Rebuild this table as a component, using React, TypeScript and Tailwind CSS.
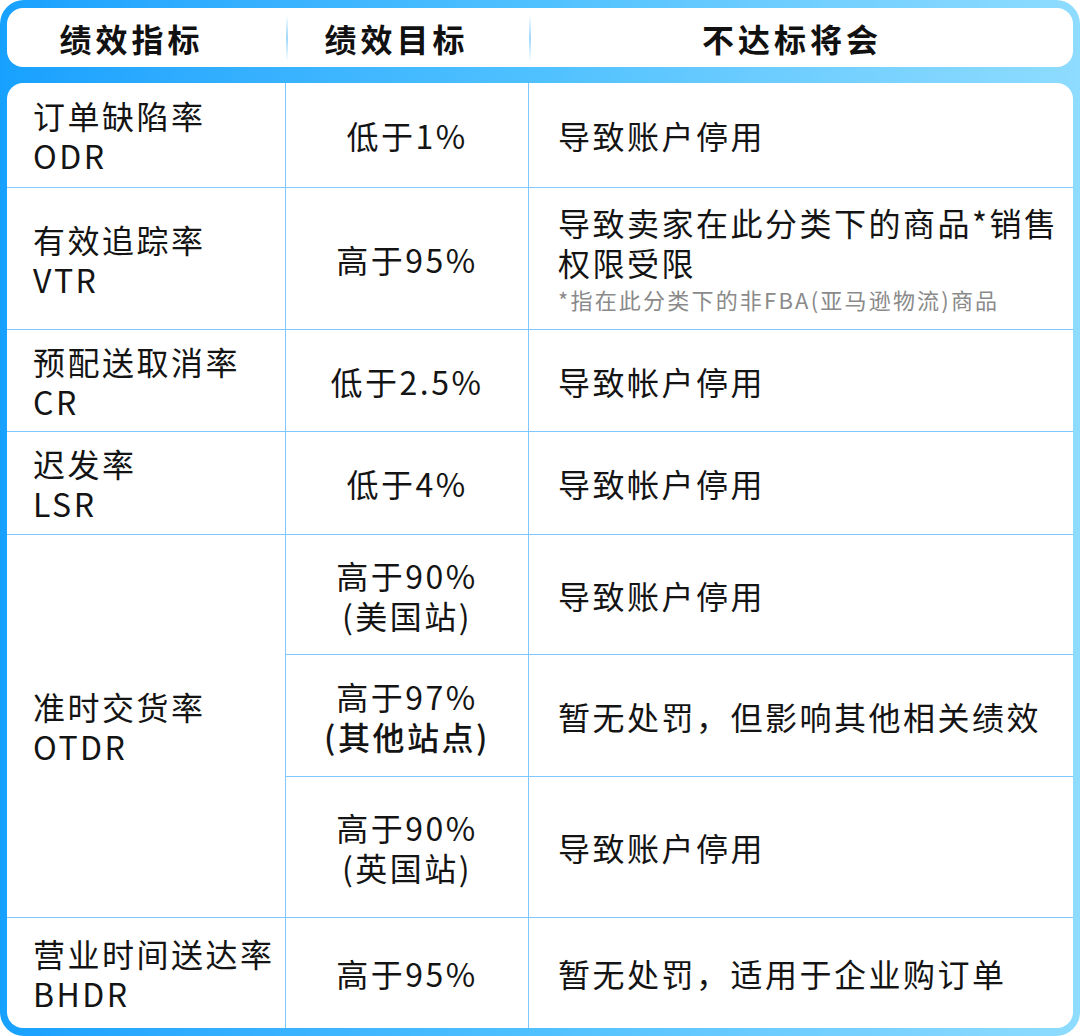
import React from 'react';

const FONT = { fontFamily: '"Noto Sans CJK SC", "Noto Sans", sans-serif' };

const line = 'border-[#7ec8ff]';

function HeadSep() {
    return <div className="w-[2px] h-[46px] bg-gradient-to-b from-transparent via-[#9fd8ff] to-transparent" />;
}

const App: React.FC = () => {
    return (
        <div style={FONT} className="w-[1080px] h-[1036px] bg-white">
            <div className="w-full h-full rounded-[24px] bg-gradient-to-r from-[#17a1ff] via-[#4fc1ff] to-[#8edcff] pt-[8px] px-[7px] pb-[8px] flex flex-col">
                {/* header */}
                <div className="h-[59px] bg-white rounded-[16px] flex items-center text-[32px] font-bold tracking-[4px] text-[#111]">
                    <div className="w-[279px] pr-[30px] text-center">绩效指标</div>
                    <HeadSep />
                    <div className="w-[241px] pr-[24px] text-center">绩效目标</div>
                    <HeadSep />
                    <div className="flex-1 pr-[20px] text-center">不达标将会</div>
                </div>

                {/* body */}
                <div className="mt-[16px] flex-1 bg-white rounded-[16px] overflow-hidden grid grid-cols-[279px_243px_1fr] grid-rows-[105px_142px_102px_103px_120px_122px_141px_110px] text-[32px] leading-[40px] tracking-[2.5px] text-[#141414]">
                    {/* ODR */}
                    <div className={`border-r-[1.5px] border-b-[1.5px] ${line} pl-[26px] flex flex-col justify-center`}>
                        <span>订单缺陷率</span>
                        <span>ODR</span>
                    </div>
                    <div className={`border-r-[1.5px] border-b-[1.5px] ${line} flex items-center justify-center`}>低于1%</div>
                    <div className={`border-b-[1.5px] ${line} pl-[29px] flex items-center`}>导致账户停用</div>

                    {/* VTR */}
                    <div className={`border-r-[1.5px] border-b-[1.5px] ${line} pl-[26px] flex flex-col justify-center`}>
                        <span>有效追踪率</span>
                        <span>VTR</span>
                    </div>
                    <div className={`border-r-[1.5px] border-b-[1.5px] ${line} flex items-center justify-center`}>高于95%</div>
                    <div className={`border-b-[1.5px] ${line} pl-[29px] flex flex-col justify-center`}>
                        <span className="whitespace-nowrap">导致卖家在此分类下的商品*销售</span>
                        <span>权限受限</span>
                        <span className="text-[22px] leading-[34px] tracking-[2.2px] text-[#8a8a8a] whitespace-nowrap">*指在此分类下的非FBA(亚马逊物流)商品</span>
                    </div>

                    {/* CR */}
                    <div className={`border-r-[1.5px] border-b-[1.5px] ${line} pl-[26px] flex flex-col justify-center`}>
                        <span>预配送取消率</span>
                        <span>CR</span>
                    </div>
                    <div className={`border-r-[1.5px] border-b-[1.5px] ${line} flex items-center justify-center`}>低于2.5%</div>
                    <div className={`border-b-[1.5px] ${line} pl-[29px] flex items-center`}>导致帐户停用</div>

                    {/* LSR */}
                    <div className={`border-r-[1.5px] border-b-[1.5px] ${line} pl-[26px] flex flex-col justify-center`}>
                        <span>迟发率</span>
                        <span>LSR</span>
                    </div>
                    <div className={`border-r-[1.5px] border-b-[1.5px] ${line} flex items-center justify-center`}>低于4%</div>
                    <div className={`border-b-[1.5px] ${line} pl-[29px] flex items-center`}>导致帐户停用</div>

                    {/* OTDR */}
                    <div className={`row-span-3 border-r-[1.5px] border-b-[1.5px] ${line} pl-[26px] flex flex-col justify-center`}>
                        <span>准时交货率</span>
                        <span>OTDR</span>
                    </div>
                    <div className={`border-r-[1.5px] border-b-[1.5px] ${line} flex flex-col items-center justify-center`}>
                        <span>高于90%</span>
                        <span>(美国站)</span>
                    </div>
                    <div className={`border-b-[1.5px] ${line} pl-[29px] flex items-center`}>导致账户停用</div>

                    <div className={`border-r-[1.5px] border-b-[1.5px] ${line} flex flex-col items-center justify-center`}>
                        <span>高于97%</span>
                        <span className="font-medium">(其他站点)</span>
                    </div>
                    <div className={`border-b-[1.5px] ${line} pl-[29px] flex items-center`}>暂无处罚，但影响其他相关绩效</div>

                    <div className={`border-r-[1.5px] border-b-[1.5px] ${line} flex flex-col items-center justify-center`}>
                        <span>高于90%</span>
                        <span>(英国站)</span>
                    </div>
                    <div className={`border-b-[1.5px] ${line} pl-[29px] flex items-center`}>导致账户停用</div>

                    {/* BHDR */}
                    <div className={`border-r-[1.5px] ${line} pl-[26px] flex flex-col justify-center`}>
                        <span>营业时间送达率</span>
                        <span>BHDR</span>
                    </div>
                    <div className={`border-r-[1.5px] ${line} flex items-center justify-center`}>高于95%</div>
                    <div className="pl-[29px] flex items-center">暂无处罚，适用于企业购订单</div>
                </div>
            </div>
        </div>
    );
};

export default App;
